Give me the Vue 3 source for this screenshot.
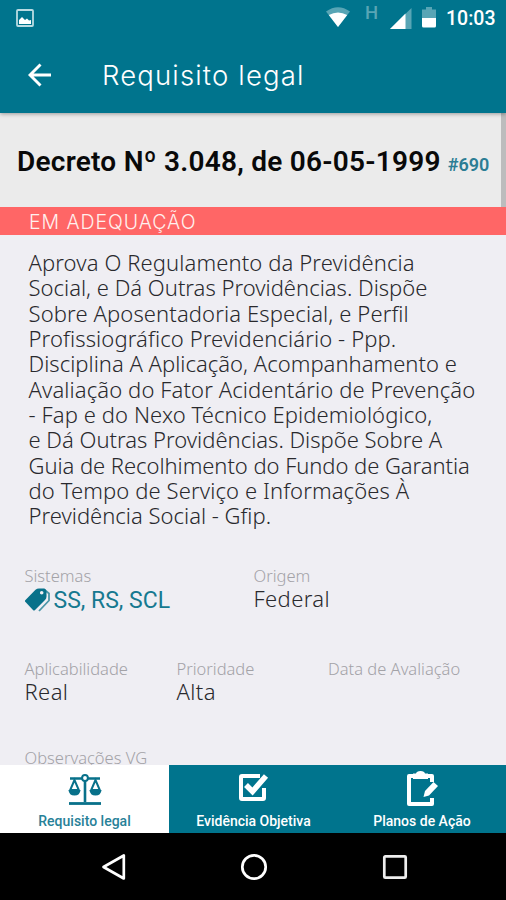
<script setup>
const summary = [
  { text: 'Aprova O Regulamento da Previdência', spacing: 0.11 },
  { text: 'Social, e Dá Outras Providências. Dispõe', spacing: 0.01 },
  { text: 'Sobre Aposentadoria Especial, e Perfil', spacing: 0.12 },
  { text: 'Profissiográfico Previdenciário - Ppp.', spacing: 0.12 },
  { text: 'Disciplina A Aplicação, Acompanhamento e', spacing: 0.02 },
  { text: 'Avaliação do Fator Acidentário de Prevenção', spacing: 0.11 },
  { text: '- Fap e do Nexo Técnico Epidemiológico,', spacing: 0.1 },
  { text: 'e Dá Outras Providências. Dispõe Sobre A', spacing: 0 },
  { text: 'Guia de Recolhimento do Fundo de Garantia', spacing: -0.05 },
  { text: 'do Tempo de Serviço e Informações À', spacing: 0.11 },
  { text: 'Previdência Social - Gfip.', spacing: 0.01 },
]
</script>

<template>
  <div class="screen">
    <header class="top">
      <div class="status">
        <svg class="pic" width="18" height="18" viewBox="0 0 18 18">
          <rect x="1" y="1" width="16" height="16" rx="1" fill="none" stroke="#b9dbe2" stroke-width="1.8" />
          <path d="M3 15V11L6 8L9 11L11 9.500L13 11.500L15 11V15Z" fill="#fff" />
        </svg>
        <svg class="wifi" width="24" height="20" viewBox="0 0 24 20">
          <path d="M0 4.6Q12 -4.2 24 4.6L12 20Z" fill="#58a5b5" />
          <path d="M2.8 8Q12 3 21.2 8L12 20Z" fill="#fff" />
        </svg>
        <span class="network">H</span>
        <svg class="signal" width="22" height="21" viewBox="0 0 22 21">
          <path d="M0 21L21.500 0V21Z" fill="#58a5b5" />
          <path d="M0 21L15.500 5.500V21Z" fill="#fff" />
        </svg>
        <svg class="battery" width="14" height="21" viewBox="0 0 14 21">
          <path d="M4 0H10V2.500H14V11H0V2.500H4Z" fill="#58a5b5" />
          <path d="M0 11H14V19Q14 20.500 12.500 20.500H1.500Q0 20.500 0 19Z" fill="#fff" />
        </svg>
        <span class="clock">10:03</span>
      </div>
      <div class="bar">
        <svg width="24" height="24" viewBox="0 0 24 24">
          <path d="M12.500 1.500L2 12L12.500 22.500M2 12H23" fill="none" stroke="#fff" stroke-width="2.900" />
        </svg>
        <h1>Requisito legal</h1>
      </div>
    </header>

    <main>
      <section class="decree">
        <h2>Decreto Nº 3.048, de 06-05-1999</h2>
        <span class="code">#690</span>
      </section>
      <div class="state"><span>EM ADEQUAÇÃO</span></div>
      <p class="summary">
        <span v-for="line in summary" :key="line.text" :style="{ letterSpacing: line.spacing + 'px' }">{{ line.text }}</span>
      </p>

      <div class="row two">
        <div class="field">
          <label>Sistemas</label>
          <div class="systems">
            <svg width="26" height="24" viewBox="0 0 26 24">
              <path d="M18.500 1L24 5.500V12.500L14 23" fill="none" stroke="#4c96a8" stroke-width="1.800" />
              <path fill-rule="evenodd" d="M0 12.500L10.500 1.800Q12 .5 14 .5H18.500Q21 .5 21.500 3V8.500Q21.500 10.500 20 12L10 22Q9 23 8 22L.5 14Q-.5 13 0 12.500ZM16.700 3A1.800 1.800 0 1 0 16.700 6.600A1.800 1.800 0 1 0 16.700 3Z" fill="#08718a" />
            </svg>
            <span>SS, RS, SCL</span>
          </div>
        </div>
        <div class="field"><label>Origem</label><div class="value wide">Federal</div></div>
      </div>

      <div class="row three">
        <div class="field"><label>Aplicabilidade</label><div class="value wide">Real</div></div>
        <div class="field"><label>Prioridade</label><div class="value wide">Alta</div></div>
        <div class="field"><label>Data de Avaliação</label></div>
      </div>
      <div class="notes"><label>Observações VG</label></div>
      <i class="thumb"></i>
    </main>

    <nav class="tabs">
      <div class="tab active">
        <svg width="34" height="34" viewBox="0 0 34 34" fill="none" stroke="#08718a">
          <path d="M2 5.500H14M20 5.500H32M17 8V29" stroke-width="2.600" />
          <circle cx="17" cy="5" r="2.900" stroke-width="2" />
          <path d="M1 30.500H33" stroke-width="2.800" />
          <path d="M6.500 7L2.200 17H10.800ZM27.500 7L23.200 17H31.800Z" stroke-width="2" />
          <path d="M.5 17H12.500Q12 22.500 6.500 22.500T.5 17ZM21.500 17H33.500Q33 22.500 27.500 22.500T21.500 17Z" fill="#08718a" stroke="none" />
        </svg>
        <span>Requisito legal</span>
      </div>
      <div class="tab evidence">
        <svg width="34" height="34" viewBox="0 0 34 34">
          <path d="M23 5H5Q4 5 4 6V27Q4 28 5 28H26Q27 28 27 27V17" fill="none" stroke="#fff" stroke-width="4" />
          <path d="M9 14L15.500 20.500L29 5" fill="none" stroke="#fff" stroke-width="5.500" />
        </svg>
        <span>Evidência Objetiva</span>
      </div>
      <div class="tab plans">
        <svg width="34" height="36" viewBox="0 0 34 36">
          <path d="M27 11V5H4V33H27V27" fill="none" stroke="#fff" stroke-width="4" stroke-linejoin="round" />
          <path d="M8 2.500H11Q11.500 0 15.500 0T20 2.500H23V8H8Z" fill="#fff" />
          <path d="M18.500 26L20 20L28.500 11L33 15L24 24.500Z" fill="#fff" />
        </svg>
        <span>Planos de Ação</span>
      </div>
    </nav>

    <footer class="system">
      <svg width="26" height="28" viewBox="0 0 26 28"><path d="M23.800 2.500V25.500L3.500 14Z" fill="none" stroke="#fff" stroke-width="2.700" stroke-linejoin="round" /></svg>
      <svg width="28" height="28" viewBox="0 0 28 28"><circle cx="14" cy="14" r="11.700" fill="none" stroke="#fff" stroke-width="2.700" /></svg>
      <svg width="26" height="28" viewBox="0 0 26 28"><rect x="2.300" y="3.300" width="21.400" height="21.400" rx="1" fill="none" stroke="#eee" stroke-width="2.700" /></svg>
    </footer>
  </div>
</template>

<style>
body { margin: 0; background: #000; }
</style>

<style scoped>
* { box-sizing: border-box; }
.screen { width: 506px; height: 900px; display: flex; flex-direction: column; overflow: hidden; background: #efeef3; font-family: "Noto Sans", sans-serif; font-weight: 300; }
h1, h2, p { margin: 0; }
svg { display: block; flex: none; }
.top { height: 113px; flex: none; background: #00748d; color: #fff; z-index: 1; box-shadow: 0 1px 4px rgba(0, 0, 0, .35); }
.status { height: 37px; display: flex; align-items: flex-start; padding: 7px 0 0 16px; }
.pic { margin-top: 2px; }
.wifi { margin-left: 292px; }
.network { width: 13px; margin: -5px 0 0 15px; font: 500 18.500px/22px Roboto, sans-serif; color: #58a5b5; }
.signal { margin: 1px 0 0 12px; }
.battery { margin-left: 10px; }
.clock { margin-left: 10px; font: 500 19.500px/23px Roboto, sans-serif; white-space: nowrap; }
.bar { display: flex; align-items: center; height: 76px; padding-left: 28px; }
.bar h1 { margin-left: 50px; font: 300 27.500px/34px Inter, sans-serif; letter-spacing: 1.150px; white-space: nowrap; }
main { position: relative; flex: 1; min-height: 0; overflow: hidden; }
.decree { height: 94px; background: #ebebeb; display: flex; align-items: baseline; padding: 32px 0 0 17px; white-space: nowrap; }
.decree h2 { font: 600 28px/34px Roboto, sans-serif; letter-spacing: .25px; color: #090909; }
.code { margin-left: 7px; font: 600 18px/24px Roboto, sans-serif; color: #2c7d94; }
.state { position: relative; z-index: 1; height: 28px; background: #ff6666; color: #fff0ee; padding-left: 29px; font: 300 19.500px/30px Inter, sans-serif; letter-spacing: .95px; }
.summary { padding: 15px 0 0 28.500px; font-size: 22px; line-height: 25.350px; color: #29292d; white-space: nowrap; }
.summary span { display: block; }
.row { display: grid; padding-left: 24.500px; color: #29292d; }
.two { grid-template-columns: 229px 1fr; margin-top: 36px; height: 93px; }
.three { grid-template-columns: 152px 151.500px 1fr; height: 89px; }
label { display: block; font-size: 16.500px; line-height: 22px; color: #a3a2a7; white-space: nowrap; }
.value { font-size: 22px; line-height: 25px; margin-top: -.5px; }
.wide { letter-spacing: .4px; }
.systems { display: flex; align-items: center; gap: 3px; height: 27px; color: #167990; font: 400 23px/27px Roboto, sans-serif; white-space: nowrap; }
.notes { padding-left: 24.500px; }
.thumb { position: absolute; top: 0; right: 0; width: 5px; height: 95px; background: #bcbcbd; }
.tabs { height: 68px; flex: none; display: grid; grid-template-columns: 169px 169px 168px; background: #00748d; color: #fff; }
.tab { display: flex; flex-direction: column; align-items: center; padding-top: 8px; }
.evidence { padding-top: 6px; }
.plans { padding-top: 5.500px; }
.tab span { margin-top: auto; font: 500 14px/23px Roboto, sans-serif; white-space: nowrap; }
.tab.active { background: #fff; color: #278198; }
.system { height: 67px; flex: none; background: #000; display: flex; justify-content: center; gap: 114px; padding: 20px 0 0 1px; }
</style>
